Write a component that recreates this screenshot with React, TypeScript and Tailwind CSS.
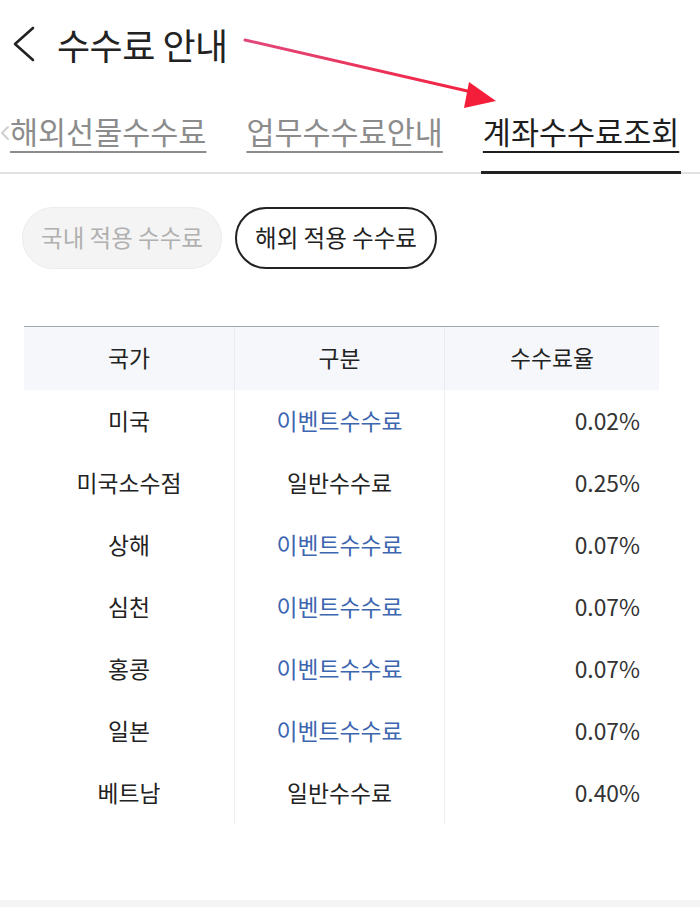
const rows = [
  { country: '미국', kind: '이벤트수수료', event: true, rate: '0.02%' },
  { country: '미국소수점', kind: '일반수수료', event: false, rate: '0.25%' },
  { country: '상해', kind: '이벤트수수료', event: true, rate: '0.07%' },
  { country: '심천', kind: '이벤트수수료', event: true, rate: '0.07%' },
  { country: '홍콩', kind: '이벤트수수료', event: true, rate: '0.07%' },
  { country: '일본', kind: '이벤트수수료', event: true, rate: '0.07%' },
  { country: '베트남', kind: '일반수수료', event: false, rate: '0.40%' },
]

function App() {
  return (
    <div
      className="relative w-[700px] h-[907px] bg-white overflow-hidden text-[#222]"
      style={{ fontFamily: '"Noto Sans CJK KR", "Noto Sans", sans-serif' }}
    >
      {/* Header */}
      <div className="h-[90px] flex items-center pl-[12px] pb-[2px]">
        <svg width="24" height="36" viewBox="0 0 24 36" className="mr-[21px]">
          <path d="M21 2 L3 18 L21 34" fill="none" stroke="#222" strokeWidth="2.6" strokeLinecap="round" strokeLinejoin="round" />
        </svg>
        <h1 className="text-[36px] leading-none font-normal tracking-[-0.5px]">수수료 안내</h1>
      </div>

      {/* Tabs */}
      <div className="relative h-[84px] border-b-2 border-[#e2e2e2]">
        <div className="flex items-center h-full text-[30.5px] leading-none">
          <div className="flex items-center text-[#8c8c8c]">
            <svg width="10" height="16" viewBox="0 0 10 16" className="mt-[4px]">
              <path d="M8 2 L2 8 L8 14" fill="none" stroke="#cfcfcf" strokeWidth="2" strokeLinecap="round" strokeLinejoin="round" />
            </svg>
            <span className="underline underline-offset-[7px] decoration-[2px]">해외선물수수료</span>
          </div>
          <div className="ml-[40px] text-[#8c8c8c] underline underline-offset-[7px] decoration-[2px]">업무수수료안내</div>
          <div className="ml-[40px] relative h-full flex items-center text-[#1e1e1e] underline underline-offset-[7px] decoration-[2px]">
            계좌수수료조회
            <div className="absolute left-[-2px] right-[-2px] bottom-[-2px] h-[3px] bg-[#222]" />
          </div>
        </div>
      </div>

      {/* Toggle pills */}
      <div className="flex gap-[13px] pl-[22px] pt-[33px]">
        <div className="w-[200px] h-[62px] rounded-full bg-[#f4f4f4] border border-[#ececec] flex items-center justify-center text-[23.5px] text-[#b0b0b0]">
          국내 적용 수수료
        </div>
        <div className="w-[202px] h-[62px] rounded-full border-2 border-[#222] flex items-center justify-center text-[23.5px] text-[#222]">
          해외 적용 수수료
        </div>
      </div>

      {/* Table */}
      <div className="mx-[24px] mt-[57px] w-[635px] text-[22.8px]">
        <div className="grid grid-cols-[211px_210px_214px] h-[64px] bg-[#f5f7fa] border-t border-[#a3a8b0]">
          <div className="flex items-center justify-center border-r border-[#e8ebef]">국가</div>
          <div className="flex items-center justify-center border-r border-[#e8ebef]">구분</div>
          <div className="flex items-center justify-center">수수료율</div>
        </div>
        {rows.map((r) => (
          <div key={r.country} className="grid grid-cols-[211px_210px_214px] h-[62px]">
            <div className="flex items-center justify-center border-r border-[#efefef]">{r.country}</div>
            <div
              className={`flex items-center justify-center border-r border-[#efefef] ${
                r.event ? 'text-[#3d66b0]' : 'text-[#222]'
              }`}
            >
              {r.kind}
            </div>
            <div className="flex items-center justify-end pr-[19px] text-[#333]">{r.rate}</div>
          </div>
        ))}
      </div>

      {/* bottom strip */}
      <div className="absolute left-0 right-0 bottom-0 h-[7px] bg-[#f4f4f4]" />

      {/* Annotation arrow */}
      <svg className="absolute left-0 top-0 pointer-events-none" width="700" height="130" viewBox="0 0 700 130">
        <defs>
          <linearGradient id="arw" x1="245" y1="40" x2="495" y2="101" gradientUnits="userSpaceOnUse">
            <stop offset="0" stopColor="#e0487a" />
            <stop offset="1" stopColor="#f51e3a" />
          </linearGradient>
        </defs>
        <path d="M245 40 L476 93" stroke="url(#arw)" strokeWidth="3" strokeLinecap="round" />
        <path d="M496 101 L469 82 L464 108 Z" fill="#f51e3a" />
      </svg>
    </div>
  )
}

export default App
